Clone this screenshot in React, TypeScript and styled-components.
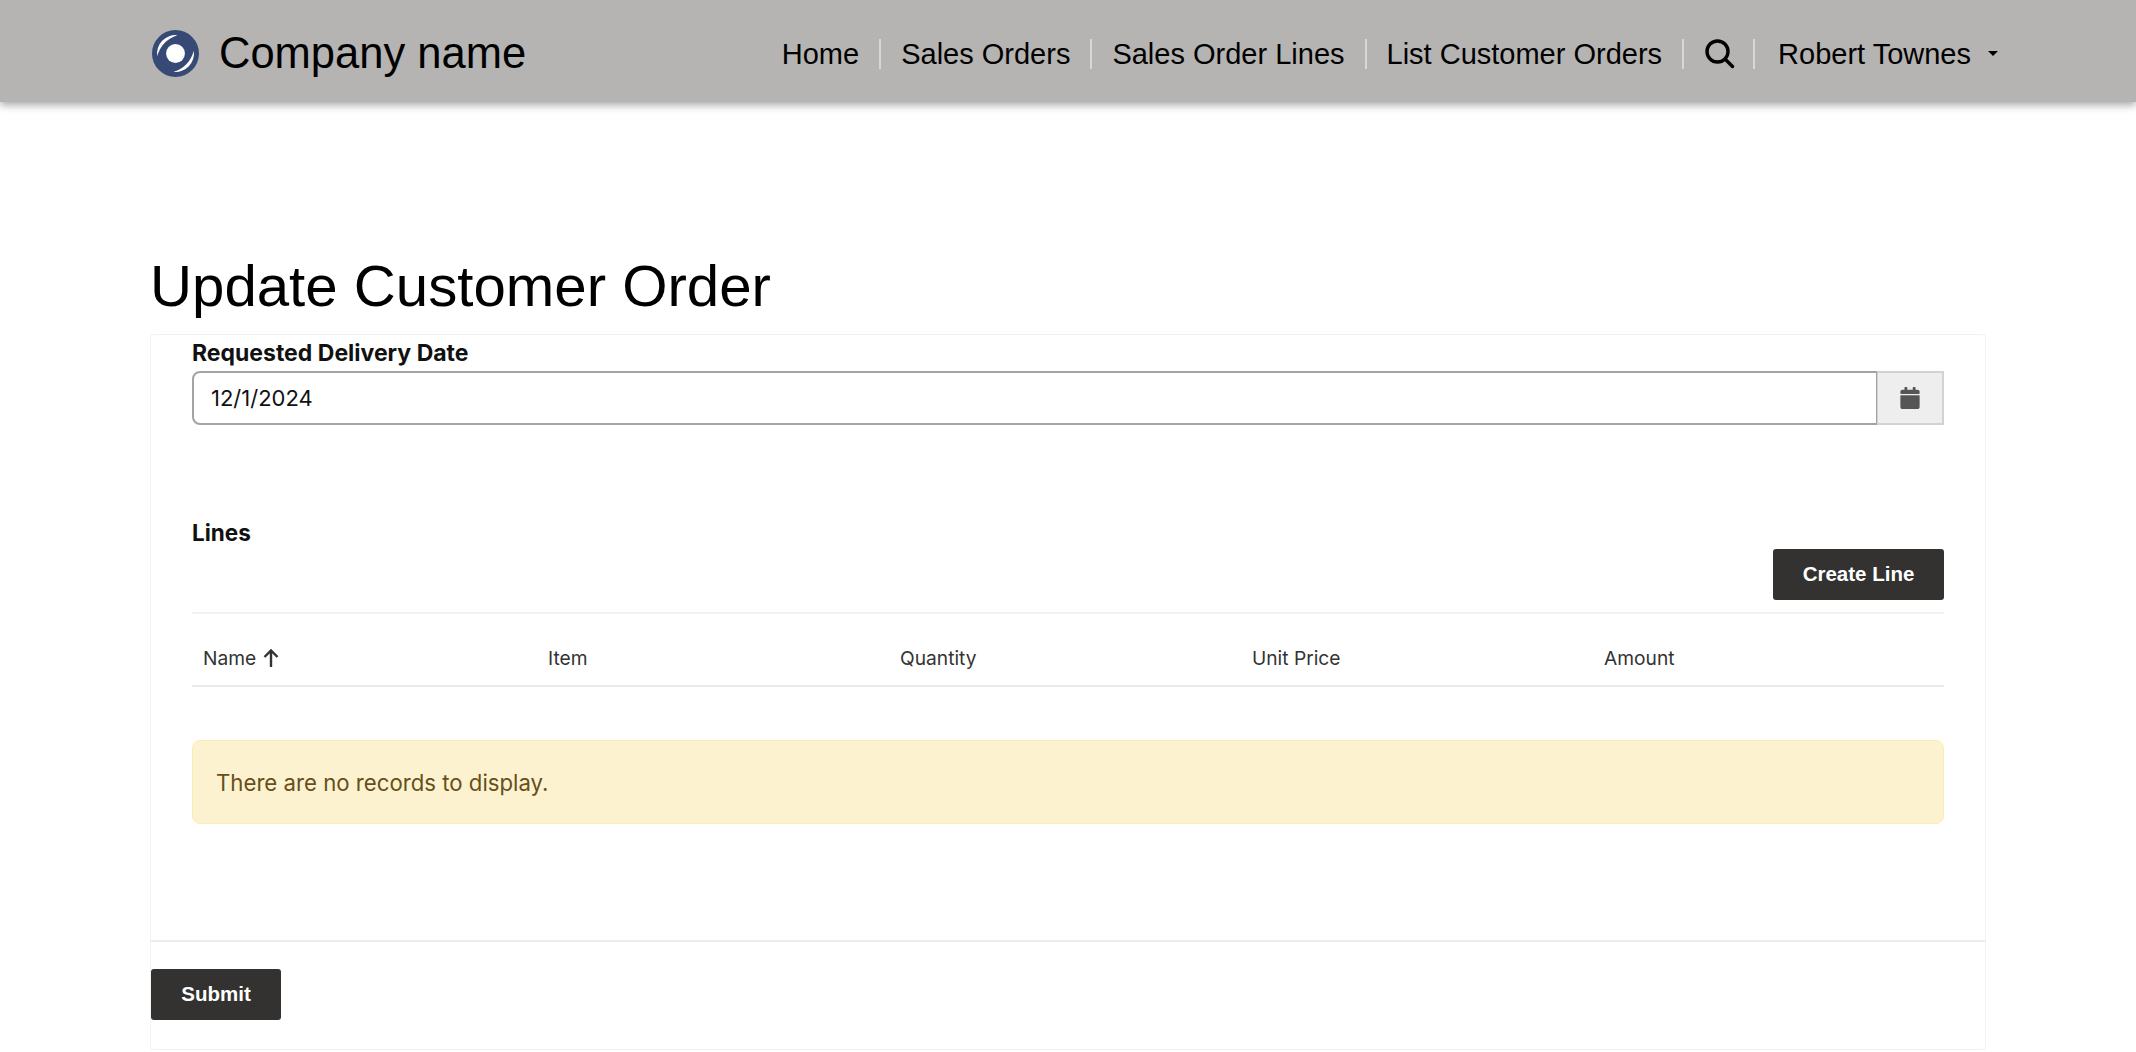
import React from 'react';
import styled, { createGlobalStyle } from 'styled-components';
import { FaCalendar } from 'react-icons/fa';

const GlobalStyle = createGlobalStyle`
  html, body {
    margin: 0;
    padding: 0;
    background: #fff;
    font-family: "Liberation Sans", Arial, sans-serif;
    color: #000;
  }
  * { box-sizing: border-box; }
`;

const Header = styled.header`
  height: 102px;
  background: #b5b4b2;
  box-shadow: 0 3px 8px rgba(0, 0, 0, 0.35);
  padding: 5px 118px 0 150px;
  display: flex;
  align-items: center;
  justify-content: space-between;
`;

const Brand = styled.div`
  display: flex;
  align-items: center;
  gap: 20px;
  font-size: 43.5px;
  padding-left: 2px;
`;

const Nav = styled.nav`
  display: flex;
  align-items: center;
`;

const NavItem = styled.div<{ $last?: boolean }>`
  font-size: 29px;
  line-height: 30px;
  padding: 0 20px;
  border-right: ${(p) => (p.$last ? 'none' : '2px solid #d8d7d5')};
  display: flex;
  align-items: center;
  height: 30px;
  color: #000;
`;

const SearchItem = styled(NavItem)`
  padding: 0 18px 0 21px;
`;

const UserItem = styled(NavItem)`
  padding-left: 23px;
`;

const Caret = styled.span`
  width: 0;
  height: 0;
  margin-left: 17px;
  border-left: 5.5px solid transparent;
  border-right: 5.5px solid transparent;
  border-top: 5.5px solid #000;
`;

const Main = styled.main`
  padding: 152px 150px 0;
`;

const Title = styled.h1`
  margin: 0;
  height: 80px;
  font-size: 58.2px;
  font-weight: 400;
  line-height: 64px;
`;

const Card = styled.form`
  border: 1px solid #f2f2f2;
  border-radius: 3px;
  height: 716px;
  display: flex;
  flex-direction: column;
`;

const Body = styled.div`
  height: 605px;
  padding: 0 41px;
`;

const FieldLabel = styled.label`
  display: block;
  padding-top: 1px;
  font-family: Inter, "Liberation Sans", sans-serif;
  font-size: 23px;
  font-weight: 700;
  line-height: 35px;
  color: #111;
`;

const DateField = styled.div`
  display: flex;
  height: 54px;
`;

const DateInput = styled.div`
  flex: 1;
  border: 2px solid #a3a3a3;
  border-right-width: 1px;
  border-radius: 8px 0 0 8px;
  padding: 0 17px;
  display: flex;
  align-items: center;
  font-family: Inter, "Liberation Sans", sans-serif;
  font-size: 22px;
  color: #111;
`;

const CalendarAddon = styled.div`
  width: 67px;
  border: 2px solid #d2d2d2;
  border-left-width: 1px;
  background: #eeeeee;
  display: flex;
  align-items: center;
  justify-content: center;
  color: #555;
`;

const LinesHead = styled.div`
  margin-top: 89px;
  height: 100px;
  display: flex;
  justify-content: space-between;
  border-bottom: 2px solid #f1f1f1;
`;

const LinesLabel = styled.div`
  padding-top: 1px;
  font-family: Inter, "Liberation Sans", sans-serif;
  font-size: 22.5px;
  font-weight: 700;
  line-height: 36px;
  color: #111;
`;

const DarkButton = styled.button<{ $width: number }>`
  width: ${(p) => p.$width}px;
  height: 51px;
  border: none;
  border-radius: 3px;
  background: #333230;
  color: #fff;
  font-family: "Liberation Sans", Arial, sans-serif;
  font-size: 20.5px;
  font-weight: 700;
  padding: 0 0 2px;
`;

const CreateLine = styled(DarkButton)`
  margin-top: 35px;
`;

const TableHead = styled.div`
  height: 73px;
  display: grid;
  grid-template-columns: 345px 352px 352px 352px 1fr;
  align-items: center;
  padding: 17px 11px 0;
  border-bottom: 2px solid #e8e9ee;
  font-family: Inter, "Liberation Sans", sans-serif;
  font-size: 19.2px;
  color: #333;
`;

const SortName = styled.div`
  display: flex;
  align-items: center;
  gap: 6px;
`;

const Alert = styled.div`
  margin-top: 53px;
  height: 84px;
  background: #fdf2cf;
  border: 1px solid #fcecb8;
  border-radius: 8px;
  padding: 0 23px;
  display: flex;
  align-items: center;
  font-family: Inter, "Liberation Sans", sans-serif;
  font-size: 22.2px;
  color: #654f1b;
`;

const Footer = styled.div`
  flex: 1;
  border-top: 2px solid #ececec;
  padding-top: 27px;
`;

const Logo = () => (
  <svg width="47" height="47" viewBox="0 0 50 50">
    <circle cx="25" cy="25" r="25" fill="#364a75" />
    <circle cx="25" cy="25" r="10" fill="#fff" />
    <path d="M5.5 28 A19.8 19.8 0 0 1 27 5.5 A33 33 0 0 0 5.5 28Z" fill="#fff" />
    <path d="M44.5 22 A19.8 19.8 0 0 1 23 44.5 A33 33 0 0 0 44.5 22Z" fill="#fff" />
  </svg>
);

const SearchIcon = () => (
  <svg width="30" height="30" viewBox="0 0 30 30" fill="none" stroke="#000" strokeWidth="3.4" strokeLinecap="round">
    <circle cx="12.5" cy="12.5" r="10.5" />
    <path d="M20 20 L27.5 27.5" />
  </svg>
);

const UpArrow = () => (
  <svg width="18" height="20" viewBox="0 0 18 20" fill="none" stroke="#333" strokeWidth="2.4">
    <path d="M9 19 V2.5 M2.5 9 L9 2.5 L15.5 9" />
  </svg>
);

const columns = ['Item', 'Quantity', 'Unit Price', 'Amount'];

const App = () => (
  <>
    <GlobalStyle />
    <Header>
      <Brand>
        <Logo />
        Company name
      </Brand>
      <Nav>
        <NavItem>Home</NavItem>
        <NavItem>Sales Orders</NavItem>
        <NavItem>Sales Order Lines</NavItem>
        <NavItem>List Customer Orders</NavItem>
        <SearchItem>
          <SearchIcon />
        </SearchItem>
        <UserItem $last>
          Robert Townes
          <Caret />
        </UserItem>
      </Nav>
    </Header>
    <Main>
      <Title>Update Customer Order</Title>
      <Card>
        <Body>
          <FieldLabel>Requested Delivery Date</FieldLabel>
          <DateField>
            <DateInput>12/1/2024</DateInput>
            <CalendarAddon>
              <FaCalendar size={22} />
            </CalendarAddon>
          </DateField>
          <LinesHead>
            <LinesLabel>Lines</LinesLabel>
            <CreateLine type="button" $width={171}>
              Create Line
            </CreateLine>
          </LinesHead>
          <TableHead>
            <SortName>
              Name
              <UpArrow />
            </SortName>
            {columns.map((c) => (
              <div key={c}>{c}</div>
            ))}
          </TableHead>
          <Alert>There are no records to display.</Alert>
        </Body>
        <Footer>
          <DarkButton type="button" $width={130}>
            Submit
          </DarkButton>
        </Footer>
      </Card>
    </Main>
  </>
);

export default App;
